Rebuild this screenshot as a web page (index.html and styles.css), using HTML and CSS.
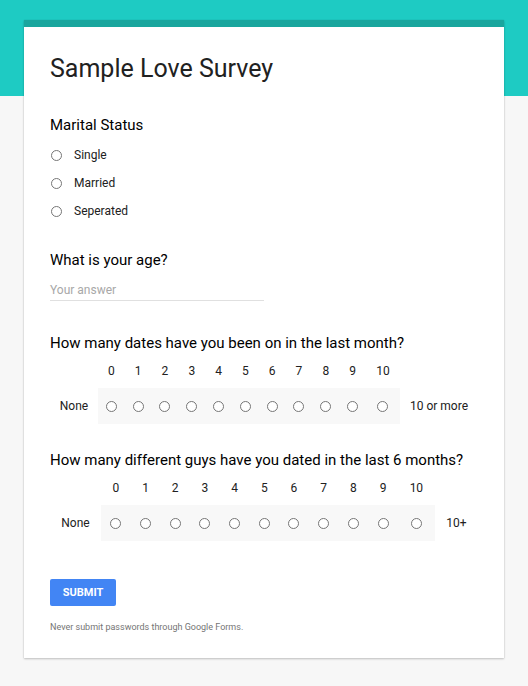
FILE: index.html
```html
<!DOCTYPE html>
<html lang="en">
<head>
<meta charset="utf-8">
<title>Sample Love Survey</title>
<link rel="stylesheet" href="styles.css">
</head>
<body>
<div class="band"></div>
<main class="card">
  <h1 class="title">Sample Love Survey</h1>

  <section class="q q-marital">
    <div class="q-label">Marital Status</div>
    <div class="options">
      <div class="option"><span class="radio"></span><span class="opt-text">Single</span></div>
      <div class="option"><span class="radio"></span><span class="opt-text">Married</span></div>
      <div class="option"><span class="radio"></span><span class="opt-text">Seperated</span></div>
    </div>
  </section>

  <section class="q q-age">
    <div class="q-label">What is your age?</div>
    <div class="answer">Your answer</div>
  </section>

  <section class="q q-scale1">
    <div class="q-label">How many dates have you been on in the last month?</div>
    <div class="scale scale-a">
      <span class="head"></span>
      <span class="head">0</span><span class="head">1</span><span class="head">2</span><span class="head">3</span><span class="head">4</span><span class="head">5</span><span class="head">6</span><span class="head">7</span><span class="head">8</span><span class="head">9</span><span class="head">10</span>
      <span class="head"></span>
      <span class="end">None</span>
      <span class="cell"><span class="radio"></span></span><span class="cell"><span class="radio"></span></span><span class="cell"><span class="radio"></span></span><span class="cell"><span class="radio"></span></span><span class="cell"><span class="radio"></span></span><span class="cell"><span class="radio"></span></span><span class="cell"><span class="radio"></span></span><span class="cell"><span class="radio"></span></span><span class="cell"><span class="radio"></span></span><span class="cell"><span class="radio"></span></span><span class="cell"><span class="radio"></span></span>
      <span class="end">10 or more</span>
    </div>
  </section>

  <section class="q q-scale2">
    <div class="q-label">How many different guys have you dated in the last 6 months?</div>
    <div class="scale scale-b">
      <span class="head"></span>
      <span class="head">0</span><span class="head">1</span><span class="head">2</span><span class="head">3</span><span class="head">4</span><span class="head">5</span><span class="head">6</span><span class="head">7</span><span class="head">8</span><span class="head">9</span><span class="head">10</span>
      <span class="head"></span>
      <span class="end">None</span>
      <span class="cell"><span class="radio"></span></span><span class="cell"><span class="radio"></span></span><span class="cell"><span class="radio"></span></span><span class="cell"><span class="radio"></span></span><span class="cell"><span class="radio"></span></span><span class="cell"><span class="radio"></span></span><span class="cell"><span class="radio"></span></span><span class="cell"><span class="radio"></span></span><span class="cell"><span class="radio"></span></span><span class="cell"><span class="radio"></span></span><span class="cell"><span class="radio"></span></span>
      <span class="end">10+</span>
    </div>
  </section>

  <button class="submit" type="button">SUBMIT</button>
  <p class="note">Never submit passwords through Google Forms.</p>
</main>
</body>
</html>
```

FILE: styles.css
```css
html, body {
  margin: 0;
  padding: 0;
}
body {
  background: #f7f7f7;
  font-family: Roboto, "Liberation Sans", Arial, sans-serif;
  color: #212121;
  position: relative;
  min-height: 686px;
}
.band {
  position: absolute;
  left: 0;
  top: 0;
  right: 0;
  height: 96px;
  background: #1ecbc3;
}
.card {
  position: relative;
  margin: 20px 24px 0;
  width: 480px;
  box-sizing: border-box;
  background: #fff;
  border-top: 7px solid #1aa69e;
  padding: 26px 26px 24px;
  box-shadow: 0 1px 2px rgba(0,0,0,0.22), 0 0 1px rgba(0,0,0,0.12);
}
.title {
  margin: 0;
  font-size: 25px;
  line-height: 32px;
  font-weight: 400;
  color: #212121;
}
.q-label {
  font-size: 15px;
  line-height: 24px;
  color: #000;
}
.q-marital {
  margin-top: 28px;
}
.options {
  margin-top: 4px;
}
.option {
  display: flex;
  align-items: center;
  height: 28px;
}
.radio {
  display: inline-block;
  width: 11px;
  height: 11px;
  box-sizing: border-box;
  border: 1px solid #767676;
  border-radius: 50%;
  background: #fff;
}
.option .radio {
  margin-left: 1px;
}
.opt-text {
  margin-left: 12px;
  font-size: 12px;
  color: #212121;
}
.q-age {
  margin-top: 23px;
}
.answer {
  margin-top: 8px;
  width: 214px;
  font-size: 12px;
  line-height: 20px;
  color: #a8a8a8;
  border-bottom: 1px solid #e0e0e0;
}
.q-scale1 {
  margin-top: 30px;
}
.q-scale2 {
  margin-top: 24px;
}
.scale {
  display: grid;
  margin-top: 4px;
  font-size: 12px;
  color: #212121;
}
.scale-a {
  grid-template-columns: 48px repeat(10, 26.8px) 34px 1fr;
}
.scale-b {
  grid-template-columns: 51px repeat(10, 29.7px) 37px 1fr;
}
.head {
  height: 24px;
  line-height: 24px;
  text-align: center;
  margin-bottom: 5px;
}
.end {
  height: 36px;
  line-height: 36px;
  text-align: center;
  white-space: nowrap;
}
.cell {
  height: 36px;
  display: flex;
  align-items: center;
  justify-content: center;
  background: #f8f8f8;
}
.submit {
  display: block;
  margin-top: 38px;
  width: 66px;
  height: 27px;
  padding: 0;
  border: 0;
  border-radius: 2px;
  background: #4285f4;
  color: #fff;
  font-family: Roboto, "Liberation Sans", Arial, sans-serif;
  font-size: 11px;
  font-weight: 700;
  letter-spacing: 0;
}
.note {
  margin: 14px 0 0;
  font-size: 9px;
  line-height: 14px;
  color: #757575;
}
```
